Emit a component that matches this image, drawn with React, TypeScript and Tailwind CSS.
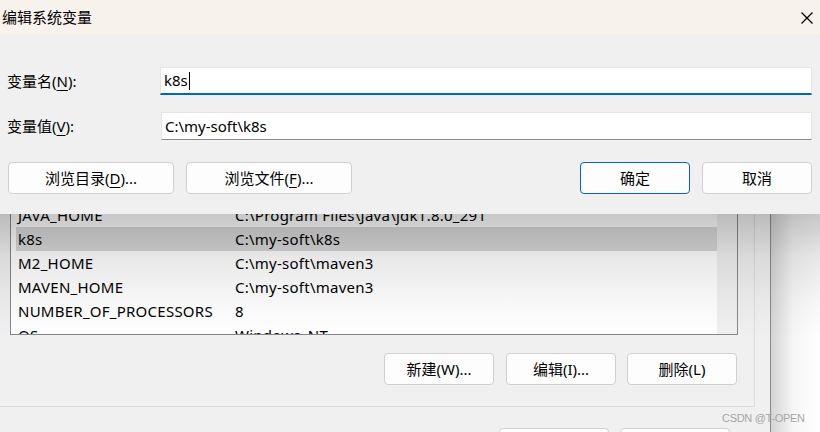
import type { ReactNode } from 'react'

const rows = [
  { name: 'JAVA_HOME', value: 'C:\\Program Files\\Java\\jdk1.8.0_291' },
  { name: 'k8s', value: 'C:\\my-soft\\k8s', selected: true },
  { name: 'M2_HOME', value: 'C:\\my-soft\\maven3' },
  { name: 'MAVEN_HOME', value: 'C:\\my-soft\\maven3' },
  { name: 'NUMBER_OF_PROCESSORS', value: '8' },
  { name: 'OS', value: 'Windows_NT' },
]

function WinButton({ children, className = '' }: { children: ReactNode; className?: string }) {
  return (
    <div
      className={`flex h-[32px] shrink-0 items-center justify-center rounded-[4px] border bg-[#fdfdfd] ${className}`}
    >
      {children}
    </div>
  )
}

function Key({ children }: { children: ReactNode }) {
  return <span className="underline underline-offset-[3px]">{children}</span>
}

export default function App() {
  return (
    <div className="relative flex h-[432px] w-[820px] overflow-hidden bg-white font-['Noto_Sans','Noto_Sans_CJK_SC',sans-serif] text-[15px] text-black">
      {/* environment variables window (behind) */}
      <div className="flex h-full w-[771px] shrink-0 flex-col border-r border-[#8a8a8a] bg-[#f0f0f0]">
        <div className="flex h-[407px] w-[755px] shrink-0 flex-col border-r border-b border-[#dcdcdc] pt-[202px] pl-[10px]">
          <div className="flex h-[133px] w-[728px] shrink-0 overflow-hidden border border-[#828790] bg-white">
            <div className="flex flex-1 flex-col pl-[5px]">
              {rows.map((r) => (
                <div
                  key={r.name}
                  className={`flex h-[24px] shrink-0 items-center pl-[2px] leading-none tracking-[0.25px] ${r.selected ? 'bg-[#d9d9d9]' : ''}`}
                >
                  <span className="w-[217px] whitespace-nowrap">{r.name}</span>
                  <span className="whitespace-nowrap">{r.value}</span>
                </div>
              ))}
            </div>
            <div className="w-[20px] bg-[#f0f0f0]" />
          </div>
          <div className="mt-[18px] flex w-[727px] justify-end">
            <WinButton className="w-[110px] border-[#d0d0d0]">新建(W)...</WinButton>
            <WinButton className="ml-[12px] w-[110px] border-[#d0d0d0]">编辑(I)...</WinButton>
            <WinButton className="ml-[11px] w-[110px] border-[#d0d0d0]">删除(L)</WinButton>
          </div>
        </div>
        <div className="mt-[21px] flex gap-[11px] pl-[499px]">
          <WinButton className="w-[110px] border-[#d0d0d0]">确定</WinButton>
          <WinButton className="w-[110px] border-[#d0d0d0]">取消</WinButton>
        </div>
      </div>
      <div className="h-full flex-1 bg-[linear-gradient(to_right,#d4d4d4,#f6f6f6_45%,#ffffff)]" />

      {/* shadow cast by the edit dialog */}
      <div className="pointer-events-none absolute top-[214px] left-0 h-[125px] w-[820px] bg-[linear-gradient(to_bottom,rgba(0,0,0,0.22),rgba(0,0,0,0.09)_35%,rgba(0,0,0,0.03)_70%,rgba(0,0,0,0))]" />

      {/* edit system variable dialog (front) */}
      <div className="absolute top-0 left-0 flex h-[214px] w-[820px] flex-col bg-[#f0f0f0]">
        <div className="flex h-[35px] shrink-0 items-center justify-between bg-[#f8f2ed] pl-[2px] pr-[7px]">
          <span>编辑系统变量</span>
          <svg width="12" height="12" viewBox="0 0 12 12" className="text-black">
            <path d="M0.5 0.5 L11.5 11.5 M11.5 0.5 L0.5 11.5" stroke="currentColor" strokeWidth="1.3" />
          </svg>
        </div>

        <div className="flex flex-col pl-[7px] pr-[8px]">
          <div className="mt-[32px] flex items-center">
            <span className="w-[153px]">
              变量名(<Key>N</Key>):
            </span>
            <div className="flex h-[28px] flex-1 items-center border border-b-2 border-[#e5e5e5] border-b-[#0067c0] bg-white pl-[3px]">
              <span>k8s</span>
              <span className="ml-px h-[18px] w-px bg-black" />
            </div>
          </div>
          <div className="mt-[17px] flex items-center">
            <span className="w-[154px]">
              变量值(<Key>V</Key>):
            </span>
            <div className="flex h-[28px] flex-1 items-center border border-[#e5e5e5] border-b-[#8a8a8a] bg-white pl-[3px]">
              C:\my-soft\k8s
            </div>
          </div>
          <div className="mt-[22px] flex items-center pl-[1px]">
            <WinButton className="w-[166px] border-[#d0d0d0]">
              浏览目录(<Key>D</Key>)...
            </WinButton>
            <WinButton className="ml-[12px] w-[166px] border-[#d0d0d0]">
              浏览文件(<Key>F</Key>)...
            </WinButton>
            <WinButton className="ml-auto w-[110px] border-[#0067c0]">确定</WinButton>
            <WinButton className="ml-[12px] w-[110px] border-[#d0d0d0]">取消</WinButton>
          </div>
        </div>
      </div>

      <span className="absolute top-[413px] left-[722px] whitespace-nowrap font-['Liberation_Sans',sans-serif] text-[11px] leading-none tracking-[-0.3px] text-[#a6a6a6]">
        CSDN @T-OPEN
      </span>
    </div>
  )
}
